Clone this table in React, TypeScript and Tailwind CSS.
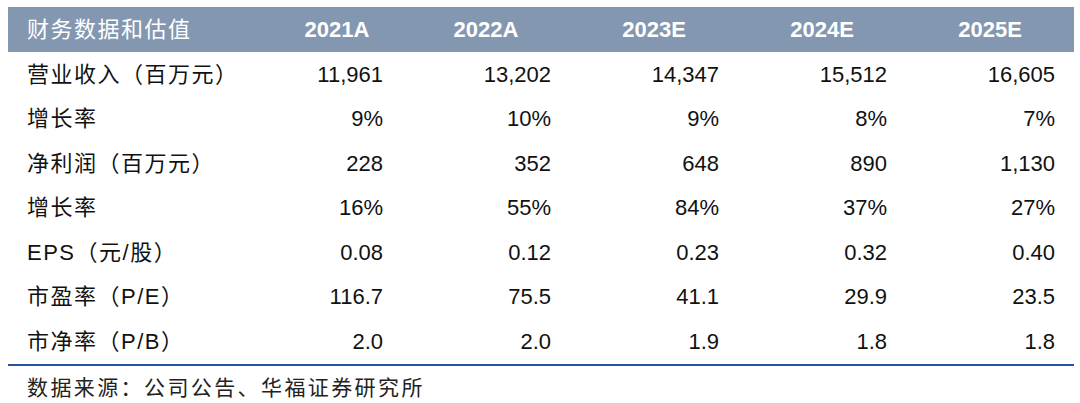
import React from 'react'

const FONT = "font-['Liberation_Sans','Noto_Sans_CJK_SC',sans-serif]"

const years = ['2021A', '2022A', '2023E', '2024E', '2025E']

const rows: { label: string; values: string[] }[] = [
  { label: '营业收入（百万元）', values: ['11,961', '13,202', '14,347', '15,512', '16,605'] },
  { label: '增长率', values: ['9%', '10%', '9%', '8%', '7%'] },
  { label: '净利润（百万元）', values: ['228', '352', '648', '890', '1,130'] },
  { label: '增长率', values: ['16%', '55%', '84%', '37%', '27%'] },
  { label: 'EPS（元/股）', values: ['0.08', '0.12', '0.23', '0.32', '0.40'] },
  { label: '市盈率（P/E）', values: ['116.7', '75.5', '41.1', '29.9', '23.5'] },
  { label: '市净率（P/B）', values: ['2.0', '2.0', '1.9', '1.8', '1.8'] },
]

export default function App() {
  return (
    <div className={`w-[1080px] h-[403px] bg-white pt-[7px] pl-[8px] ${FONT}`}>
      <div className="w-[1066px]">
        {/* header */}
        <div className="grid grid-cols-[264px_130px_168px_168px_168px_168px] h-[45px] bg-[#8497b0] text-white text-[22px]">
          <div className="flex items-center pl-[19px] tracking-[1.5px]">财务数据和估值</div>
          {years.map((y) => (
            <div key={y} className="flex items-center justify-center font-bold">
              {y}
            </div>
          ))}
        </div>

        {rows.map((r, i) => (
          <div
            key={i}
            className="grid grid-cols-[264px_130px_168px_168px_168px_168px] h-[44.5px] text-[22px] text-[#111111]"
          >
            <div className="flex items-center pl-[19px] tracking-[1.5px]">{r.label}</div>
            {r.values.map((v, j) => (
              <div key={j} className="flex items-center justify-end pr-[19px]">
                {v}
              </div>
            ))}
          </div>
        ))}

        <div className="h-[2px] bg-[#2552a3]" />
        <div className="pl-[19px] pt-[6px] text-[21px] tracking-[2.4px] text-[#222222]">
          数据来源：公司公告、华福证券研究所
        </div>
      </div>
    </div>
  )
}
